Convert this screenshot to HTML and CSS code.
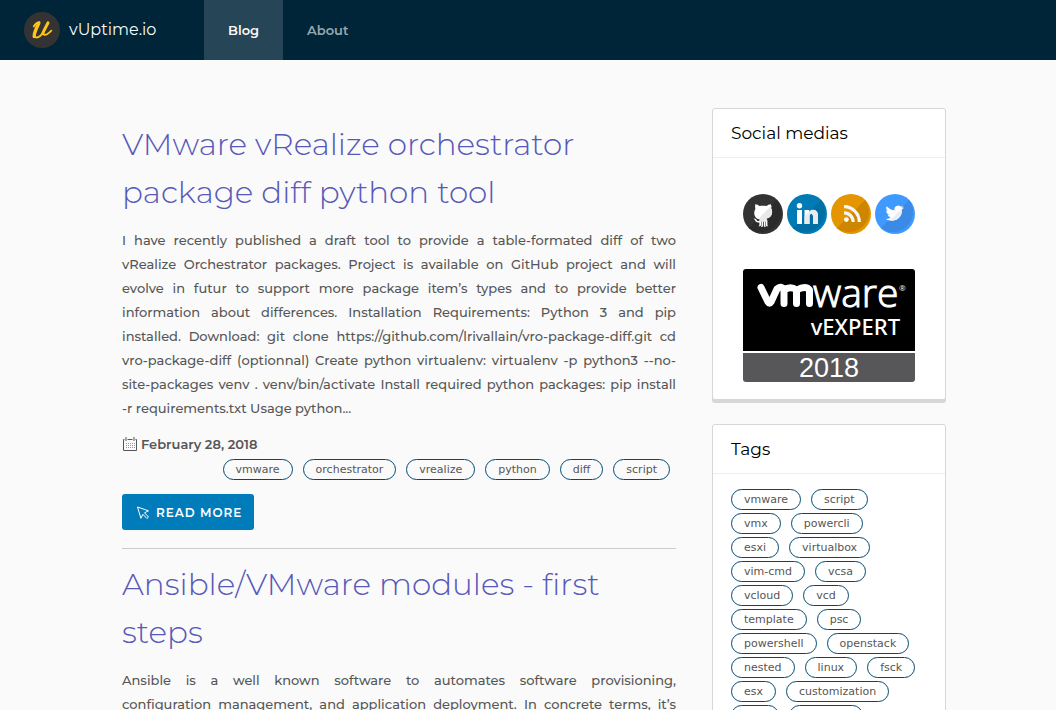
FILE: index.html
```html
<!DOCTYPE html>
<html lang="en">
<head>
<meta charset="utf-8">
<meta name="viewport" content="width=device-width, initial-scale=1">
<title>vUptime.io</title>
<link rel="stylesheet" href="styles.css">
</head>
<body>
<div class="layout">
  <header class="header">
    <a class="brand" href="#">
      <svg class="brand-logo" viewBox="0 0 36 36" fill="none" stroke="#fdc51c" stroke-linecap="round" aria-hidden="true">
        <circle cx="18" cy="18" r="18" fill="#333" stroke="none"/>
        <path d="M9.800 14.500C11 12 13 10.600 15.500 10.200M10.500 24c1.500 4 9 0 13-12.500M20 22.500c1.500 1.500 5-1.300 7.300-3.800" stroke-width="1.800"/>
        <path d="M14.800 11.200C12.500 16 10 20.500 10.200 24.500" stroke-width="3.400"/>
        <path d="M24 10.800c-2 4-4.500 8-5.300 11" stroke-width="3"/>
      </svg>
      <span>vUptime.io</span>
    </a>
    <nav class="nav">
      <a class="nav-link active" href="#">Blog</a>
      <a class="nav-link" href="#">About</a>
    </nav>
  </header>
  <div class="content">
    <main class="posts">
      <article class="post">
        <h2 class="post-title"><a href="#">VMware vRealize orchestrator package diff python tool</a></h2>
        <p class="post-text">
          <span class="line">I have recently published a draft tool to provide a table-formated diff of two</span>
          <span class="line">vRealize Orchestrator packages. Project is available on GitHub project and will</span>
          <span class="line">evolve in futur to support more package item’s types and to provide better</span>
          <span class="line">information about differences. Installation Requirements: Python 3 and pip</span>
          <span class="line">installed. Download: git clone https://github.com/lrivallain/vro-package-diff.git cd</span>
          <span class="line">vro-package-diff (optionnal) Create python virtualenv: virtualenv -p python3 --no-</span>
          <span class="line">site-packages venv . venv/bin/activate Install required python packages: pip install</span>
          <span class="line last">-r requirements.txt Usage python...</span>
        </p>
        <div class="post-date">
          <svg class="date-icon" viewBox="0 0 16 16" fill="none" stroke="#565656" aria-hidden="true">
            <path d="M2.500 3.500h-1v11h13v-11h-1M5.500 3.500h5M4 1v4M12 1v4"/>
            <path d="M4 7.500h9M4 9.500h9M4 11.500h9" stroke-dasharray="1 1" opacity=".6"/>
          </svg>
          <time datetime="2018-02-28">February 28, 2018</time>
        </div>
        <div class="tags post-tags">
          <a class="tag" href="#">vmware</a><a class="tag" href="#">orchestrator</a><a class="tag" href="#">vrealize</a><a class="tag" href="#">python</a><a class="tag" href="#">diff</a><a class="tag" href="#">script</a>
        </div>
        <button class="read-more" type="button">
          <svg class="cursor-icon" viewBox="0 0 14 14" fill="none" stroke="#fff" stroke-linejoin="round" aria-hidden="true">
            <path d="M1.500 1l11 3.800-4 2 4 4.200-1.600 1.500-4-4.200-2 4z"/>
          </svg>
          <span>READ MORE</span>
        </button>
      </article>
      <article class="post">
        <h2 class="post-title"><a href="#">Ansible/VMware modules - first steps</a></h2>
        <p class="post-text">
          <span class="line">Ansible is a well known software to automates software provisioning,</span>
          <span class="line">configuration management, and application deployment. In concrete terms, it’s</span>
          <span class="line last">a tool to automate tasks.</span>
        </p>
      </article>
    </main>
    <aside class="sidebar">
      <section class="card">
        <h3 class="card-title">Social medias</h3>
        <div class="card-body social">
          <div class="social-links">
            <a href="#" aria-label="GitHub"><svg class="social-icon" viewBox="0 0 40 40">
              <circle cx="20" cy="20" r="20" fill="#333"/>
              <path d="M34 6A20 20 0 0 1 6 34z" fill="#2b2b2b"/>
              <path d="M12.200 10.200c1.800 0 3.300 1 4.400 1.900 2.200-.5 4.600-.5 6.800 0 1.100-.9 2.600-1.900 4.400-1.900.6 1.500.5 2.900.2 3.900 1 1.300 1.300 2.800 1.100 4.700-.3 3.600-2.400 5.300-5.800 5.800.9.800 1.100 1.900 1.100 3.200v2.900c0 .8.500 1.200.8 1.500-1.500.200-2.300-.3-2.400-1.500v-3.600h-.5v4.300c0 .7.3 1.100.5 1.500-1.500 0-2-.4-2-1.500v-4.300h-.8v4.300c0 1.100-.6 1.500-2 1.500.4-.4.500-.8.500-1.500v-4.300h-.5v3.600c-.1 1.200-.9 1.700-2.400 1.500.6-.4.800-.8.800-1.500v-2.300c-2.800.4-3.600-.5-4.400-2.100-.4-.8-.9-1.200-1.500-1.700 2-.3 2.600.6 3.300 1.600.7.900 1.500 1 2.700.6.100-.5.400-.9.800-1.200-3.400-.5-5.700-2.200-6-5.800-.2-1.900.2-3.400 1.100-4.700-.4-1.600-.3-3-.2-4.900z" fill="#fff"/>
              <path d="M28.500 11.500c0 1 0 1.900-.5 2.600.8 1.300 1.100 2.600.9 4.700-.3 3.600-2.400 5.400-5.800 5.800.9.700 1.100 1.900 1.100 3.200h-7.700v-4.300z" fill="#e8e8e8"/>
            </svg></a>
            <a href="#" aria-label="LinkedIn"><svg class="social-icon" viewBox="0 0 40 40">
              <circle cx="20" cy="20" r="20" fill="#007bb6"/>
              <path d="M34 6A20 20 0 0 1 6 34z" fill="#006fa4"/>
              <circle cx="12.500" cy="11.700" r="2.700" fill="#fff"/>
              <path d="M10 16h5v14h-5zM17.500 16h4.800v2c2.400-3.500 8.700-2.800 8.700 3.500V30h-5v-7.500c0-3.700-3.500-3.500-3.500 0V30h-5z" fill="#fff"/>
              <path d="M24 16c4.500-1.200 7 1.400 7 5.500V30h-5v-7.500c0-3.700-3.500-3.500-3.500 0V30h-5v-7.500z" fill="#ebebeb"/>
            </svg></a>
            <a href="#" aria-label="RSS"><svg class="social-icon" viewBox="0 0 40 40">
              <circle cx="20" cy="20" r="20" fill="#e59500"/>
              <path d="M34 6A20 20 0 0 1 6 34z" fill="#ce8600"/>
              <circle cx="15.400" cy="25.600" r="2.400" fill="#fff"/>
              <path d="M13 18.800a9.200 9.200 0 0 1 9.200 9.200M13 12.700A15.300 15.300 0 0 1 28.300 28" fill="none" stroke="#f5f5f5" stroke-width="3.200"/>
            </svg></a>
            <a href="#" aria-label="Twitter"><svg class="social-icon" viewBox="0 0 40 40">
              <circle cx="20" cy="20" r="20" fill="#4099ff"/>
              <path d="M34 6A20 20 0 0 1 6 34z" fill="#3a8ae6"/>
              <g transform="translate(10 9.500) scale(.8)">
                <path d="M23.600 4.900c-.8.400-1.700.6-2.700.8 1-.6 1.700-1.500 2-2.600-.9.500-1.900.9-3 1.100a4.700 4.700 0 0 0-8 4.300C8 8.300 4.500 6.400 2.100 3.500c-1.200 2.200-.6 4.900 1.500 6.300-.8 0-1.500-.2-2.100-.6 0 2.200 1.500 4.200 3.800 4.700-.7.200-1.400.2-2.100.1.600 1.900 2.300 3.200 4.400 3.300a9.500 9.500 0 0 1-7 1.900C9.900 25.300 21.200 19.500 21.200 8.500v-1.200c1-.7 1.800-1.500 2.400-2.400z" fill="#fff"/>
                <path d="M21.200 6L6.500 21C14 22.500 21.200 17 21.200 8.500v-1.200c1-.7 1.800-1.500 2.400-2.400z" fill="#e9eef5"/>
              </g>
            </svg></a>
          </div>
          <svg class="badge" viewBox="0 0 172 113" role="img" aria-label="VMware vExpert 2018">
            <path d="M3 0h166a3 3 0 0 1 3 3v79H0V3a3 3 0 0 1 3-3z" fill="#000"/>
            <path d="M0 84h172v26a3 3 0 0 1-3 3H3a3 3 0 0 1-3-3z" fill="#57575a"/>
            <path d="M18 18.500l7 14.500q1.500 2.500 3 0l6-13q4-4 7 1v13.500M41 21q6.500-4.500 12.500 0v13.500M53.500 21q9.500-5 13 0v13.500" fill="none" stroke="#fff" stroke-width="7" stroke-linecap="round" stroke-linejoin="round"/>
            <text class="badge-ware" x="70" y="38">ware</text>
            <text class="badge-reg" x="156" y="22">®</text>
            <text class="badge-expert" x="157" y="66" text-anchor="end">vEXPERT</text>
            <text class="badge-year" x="86" y="108" text-anchor="middle">2018</text>
          </svg>
        </div>
      </section>
      <section class="card">
        <h3 class="card-title">Tags</h3>
        <div class="card-body tags">
          <a class="tag" href="#">vmware</a><a class="tag" href="#">script</a><a class="tag" href="#">vmx</a><a class="tag" href="#">powercli</a><a class="tag" href="#">esxi</a><a class="tag" href="#">virtualbox</a><a class="tag" href="#">vim-cmd</a><a class="tag" href="#">vcsa</a><a class="tag" href="#">vcloud</a><a class="tag" href="#">vcd</a><a class="tag" href="#">template</a><a class="tag" href="#">psc</a><a class="tag" href="#">powershell</a><a class="tag" href="#">openstack</a><a class="tag" href="#">nested</a><a class="tag" href="#">linux</a><a class="tag" href="#">fsck</a><a class="tag" href="#">esx</a><a class="tag" href="#">customization</a><a class="tag" href="#">disk</a><a class="tag" href="#">blogging</a>
        </div>
      </section>
    </aside>
  </div>
</div>
</body>
</html>
```
FILE: styles.css
```css
* { box-sizing: border-box; }

body {
  margin: 0;
  background: #fafafa;
  color: #565656;
  font: 13px/24px Metropolis, Montserrat, Inter, "Open Sans", sans-serif;
}

a { color: inherit; text-decoration: none; }

.layout { display: flex; flex-direction: column; height: 100vh; }

.header {
  display: flex;
  flex: none;
  height: 60px;
  background: #002538;
  color: #fafafa;
}

.brand {
  display: flex;
  align-items: center;
  gap: 9px;
  min-width: 204px;
  padding: 0 24px;
  font-size: 16px;
}

.brand-logo { width: 36px; height: 36px; }

.nav { display: flex; }

.nav-link {
  display: flex;
  align-items: center;
  padding: 0 24px;
  color: #99a8af;
  font-weight: 600;
}

.nav-link.active { background: #264557; color: #fafafa; }

.content {
  display: grid;
  flex: 1;
  grid-template-columns: minmax(0, 554fr) minmax(0, 234fr);
  align-items: start;
  gap: 36px;
  min-height: 0;
  padding: 48px 110px 24px 122px;
  overflow-y: auto;
  scrollbar-width: none;
}

.posts { padding-top: 12px; }

.post { padding-bottom: 18px; border-bottom: 1px solid #ccc; margin-bottom: 11px; }

.post-title {
  margin: 0 0 12px;
  color: #5659b8;
  font-size: 31px;
  font-weight: 300;
  line-height: 48px;
}

.post-text { margin: 0 0 12px; font-weight: 500; }

.line { display: block; text-align: justify; text-align-last: justify; }

.line.last { text-align-last: left; }

.post-date { display: flex; align-items: center; gap: 3px; font-weight: 600; }

.date-icon { width: 16px; height: 16px; }

.tags { display: flex; flex-wrap: wrap; gap: 3px 10px; }

.post-tags { justify-content: flex-end; padding: 3px 6px 0 0; margin-bottom: 14px; }

.tag {
  padding: 0 12px;
  border: 1px solid #004a70;
  border-radius: 11px;
  color: #565656;
  font: 11px/19px "DejaVu Sans", sans-serif;
}

.read-more {
  display: flex;
  align-items: center;
  gap: 6px;
  height: 36px;
  padding: 1px 12px 0 14px;
  border: 0;
  border-radius: 3px;
  background: #007cbb;
  color: #fff;
  font: 600 12px/36px Metropolis, Montserrat, Inter, sans-serif;
  letter-spacing: 1px;
}

.cursor-icon { width: 14px; height: 14px; }

.sidebar { display: grid; gap: 24px; }

.card {
  border: 1px solid #d7d7d7;
  border-radius: 3px;
  background: #fff;
  box-shadow: 0 3px 0 #d7d7d7;
}

.card-title {
  margin: 0;
  padding: 12px 18px;
  border-bottom: 1px solid #eee;
  color: #000;
  font-size: 17px;
  font-weight: 400;
}

.card-body { padding: 15px 28px 15px 18px; }

.social { padding: 36px 0 17px 30px; }

.social-links { display: flex; gap: 4px; margin-bottom: 35px; }

.social-icon { display: block; width: 40px; height: 40px; }

.badge { display: block; width: 172px; height: 113px; fill: #fff; }

.badge-ware { font: 300 39px "Open Sans", sans-serif; stroke: #fff; }
.badge-reg { font: 8px "Open Sans", sans-serif; }
.badge-expert { font: 500 22px "Noto Sans", sans-serif; }
.badge-year { font: 27px "Liberation Sans", sans-serif; }
```
